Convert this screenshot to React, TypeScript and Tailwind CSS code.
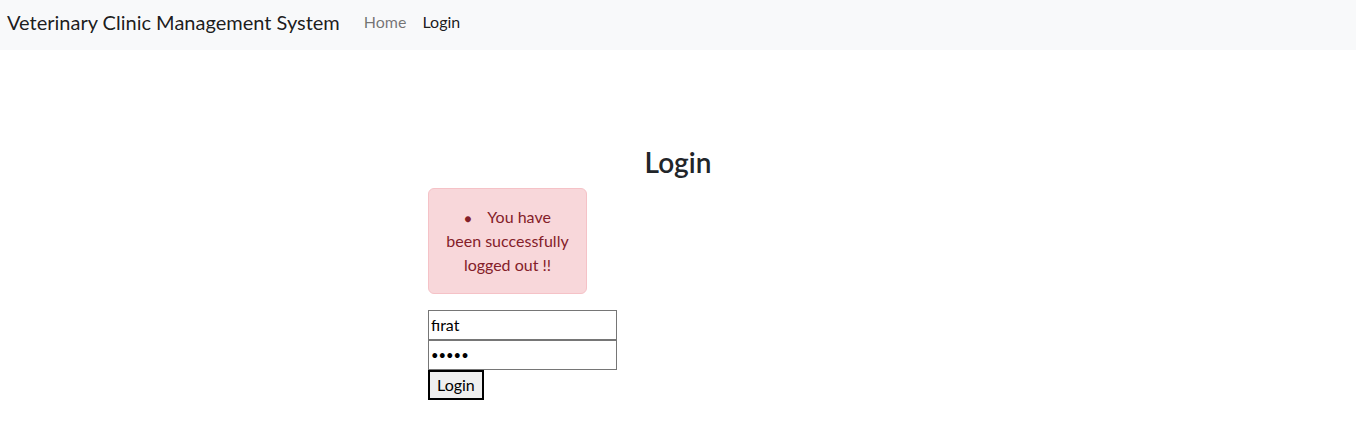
export default function App() {
  return (
    <div className="min-h-screen bg-white text-[#212529] font-['Lato',sans-serif]">
      <nav className="h-[50px] bg-[#f8f9fa] flex items-start pt-[7px] px-[7px]">
        <span className="text-[20px] leading-[30px] text-black/90 mr-4">Veterinary Clinic Management System</span>
        <a className="px-2 text-[16px] leading-[30px] text-black/55">Home</a>
        <a className="px-2 text-[16px] leading-[30px] text-black/90">Login</a>
      </nav>

      <div className="w-[500px] mx-auto pt-[96px]">
        <h3 className="text-center text-[28px] leading-[33.6px] font-semibold mb-2">Login</h3>
        <div className="w-[159px] h-[106px] mb-4 p-4 rounded-md border border-[#f5c2c7] bg-[#f8d7da] text-[#842029] text-center text-[16px] leading-6">
          <ul>
            <li>
              <span className="mr-4 text-[12px] leading-none">●</span>You have
              <br />
              been successfully
              <br />
              logged out !!
            </li>
          </ul>
        </div>
        <form className="flex flex-col items-start">
          <input
            type="text"
            defaultValue="fırat"
            className="w-[189px] h-[30px] px-[2px] border border-[#767676] text-[16px] text-black outline-none"
          />
          <input
            type="password"
            defaultValue="12345"
            className="w-[189px] h-[30px] px-[2px] border border-[#767676] text-[13px] text-black outline-none"
          />
          <button
            type="button"
            className="h-[30px] px-[7px] border-2 border-black bg-[#efefef] text-[16px] text-black"
          >
            Login
          </button>
        </form>
      </div>
    </div>
  );
}
